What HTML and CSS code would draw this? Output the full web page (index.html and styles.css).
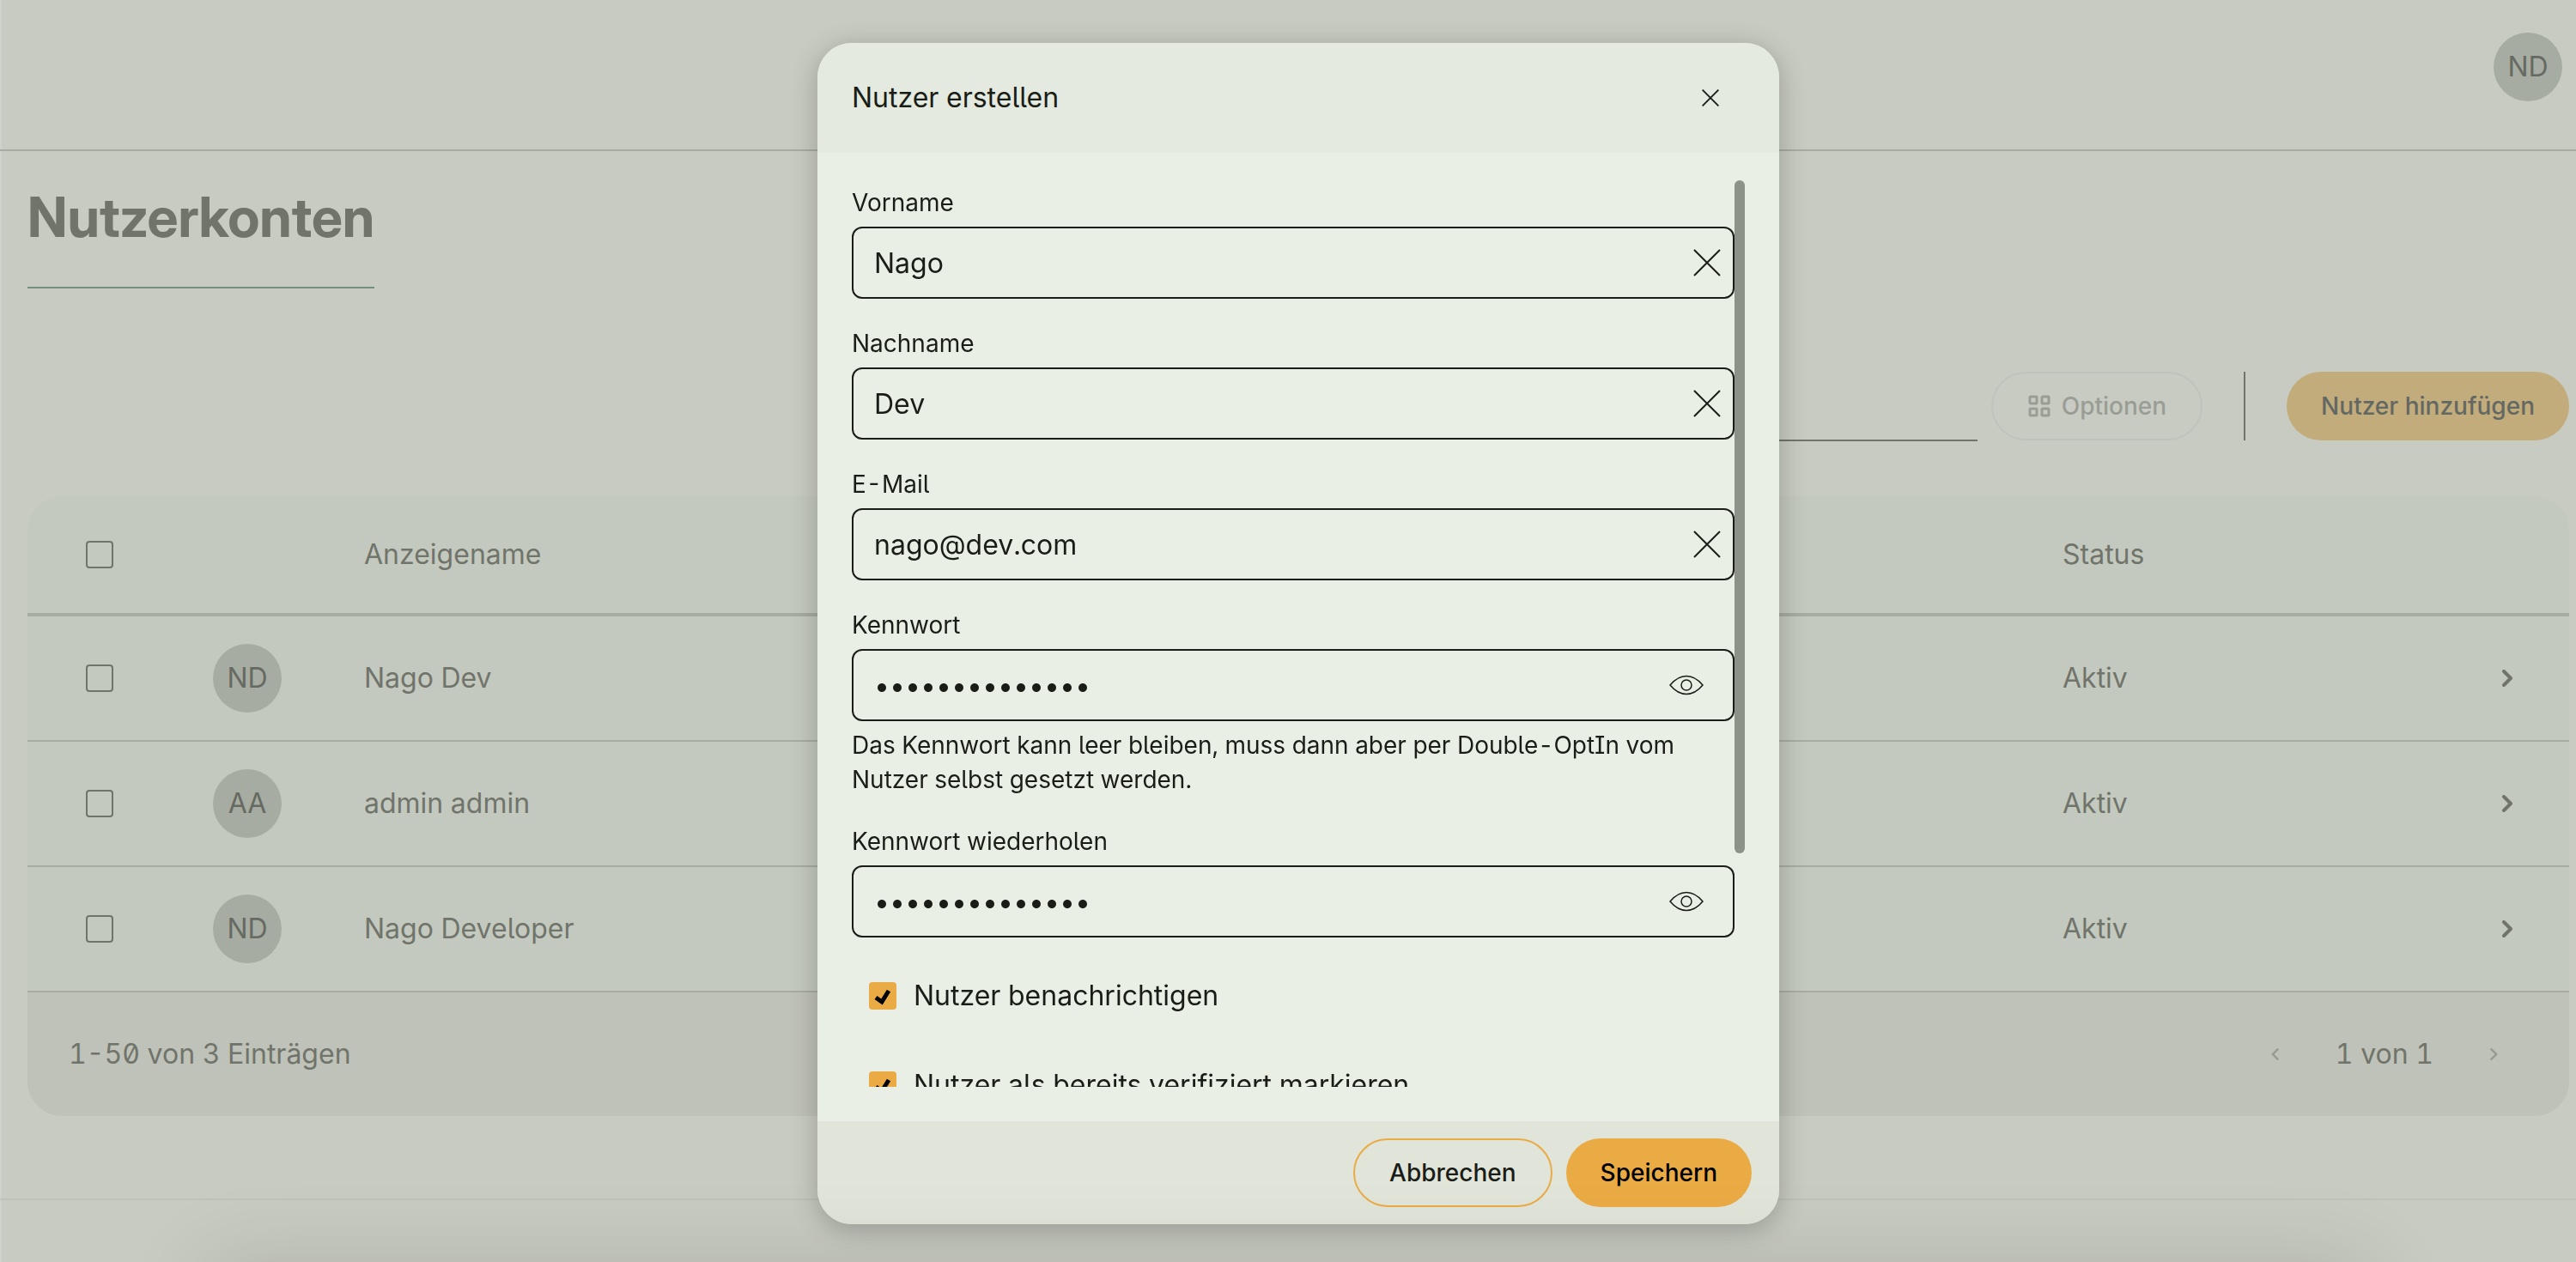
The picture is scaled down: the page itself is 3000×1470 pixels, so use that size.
FILE: index.html
```html
<!DOCTYPE html>
<html lang="de">
<head>
  <meta charset="utf-8">
  <meta name="viewport" content="width=device-width, initial-scale=1">
  <title>Nutzerkonten</title>
  <link rel="stylesheet" href="styles.css">
</head>
<body>
  <svg class="sprite" aria-hidden="true">
    <symbol id="icon-close" viewBox="0 0 32 32"><path d="M1 1l30 30M31 1L1 31" /></symbol>
    <symbol id="icon-eye" viewBox="0 0 40 40"><path d="M1 20C6 14 12 9.500 20 9.500s14 4.500 19 10.500c-5 6-11 10.500-19 10.500S6 26 1 20Z" stroke-width="1.500" /><circle cx="20" cy="20" r="6" stroke-width="1.500" /></symbol>
    <symbol id="icon-grid" viewBox="-2 -2 28 28"><rect x="1" y="1" width="8" height="8" rx="1" /><rect x="15" y="1" width="8" height="8" rx="1" /><rect x="1" y="15" width="8" height="8" rx="1" /><rect x="15" y="15" width="8" height="8" rx="1" /></symbol>
    <symbol id="icon-right" viewBox="0 0 12 20"><path d="M2 2l8 8-8 8" /></symbol>
    <symbol id="icon-left" viewBox="0 0 12 20"><path d="M10 2l-8 8 8 8" /></symbol>
  </svg>

  <header class="topbar">
    <span class="avatar">ND</span>
  </header>

  <main class="content">
    <h1 class="page-title">Nutzerkonten</h1>

    <div class="toolbar">
      <input class="search" type="search" aria-label="Suche">
      <button class="button button-disabled" type="button" disabled>
        <svg class="grid-icon"><use href="#icon-grid" /></svg>Optionen
      </button>
      <span class="divider"></span>
      <button class="button button-muted" type="button">Nutzer hinzufügen</button>
    </div>

    <section class="card">
      <table class="users">
        <colgroup>
          <col class="col-check"><col class="col-avatar"><col><col class="col-status"><col class="col-open">
        </colgroup>
        <thead>
          <tr>
            <th class="cell-check"><input class="tick" type="checkbox" aria-label="Alle auswählen"></th>
            <th></th>
            <th>Anzeigename</th>
            <th>Status</th>
            <th></th>
          </tr>
        </thead>
        <tbody>
          <tr>
            <td class="cell-check"><input class="tick" type="checkbox" aria-label="Nago Dev auswählen"></td>
            <td><span class="avatar">ND</span></td>
            <td>Nago Dev</td>
            <td>Aktiv</td>
            <td class="cell-open"><svg class="chevron"><use href="#icon-right" /></svg></td>
          </tr>
          <tr>
            <td class="cell-check"><input class="tick" type="checkbox" aria-label="admin admin auswählen"></td>
            <td><span class="avatar">AA</span></td>
            <td>admin admin</td>
            <td>Aktiv</td>
            <td class="cell-open"><svg class="chevron"><use href="#icon-right" /></svg></td>
          </tr>
          <tr>
            <td class="cell-check"><input class="tick" type="checkbox" aria-label="Nago Developer auswählen"></td>
            <td><span class="avatar">ND</span></td>
            <td>Nago Developer</td>
            <td>Aktiv</td>
            <td class="cell-open"><svg class="chevron"><use href="#icon-right" /></svg></td>
          </tr>
        </tbody>
      </table>
      <footer class="pager">
        <span class="pager-count">1-50 von 3 Einträgen</span>
        <button class="pager-button" type="button" aria-label="Zurück" disabled><svg class="pager-icon"><use href="#icon-left" /></svg></button>
        <span>1 von 1</span>
        <button class="pager-button" type="button" aria-label="Weiter" disabled><svg class="pager-icon"><use href="#icon-right" /></svg></button>
      </footer>
    </section>
  </main>

  <footer class="page-footer"></footer>

  <div class="overlay">
    <form class="modal" role="dialog" aria-labelledby="modal-title">
      <header class="modal-header">
        <h2 class="modal-title" id="modal-title">Nutzer erstellen</h2>
        <button class="icon-button modal-close" type="button" aria-label="Schließen"><svg class="close-icon"><use href="#icon-close" /></svg></button>
      </header>

      <div class="modal-body">
        <div class="fields">
          <div class="field">
            <label for="first-name">Vorname</label>
            <div class="control">
              <input id="first-name" type="text" value="Nago">
              <button class="icon-button" type="button" aria-label="Leeren"><svg class="clear-icon"><use href="#icon-close" /></svg></button>
            </div>
          </div>
          <div class="field">
            <label for="last-name">Nachname</label>
            <div class="control">
              <input id="last-name" type="text" value="Dev">
              <button class="icon-button" type="button" aria-label="Leeren"><svg class="clear-icon"><use href="#icon-close" /></svg></button>
            </div>
          </div>
          <div class="field">
            <label for="email">E-Mail</label>
            <div class="control">
              <input id="email" type="email" value="nago@dev.com">
              <button class="icon-button" type="button" aria-label="Leeren"><svg class="clear-icon"><use href="#icon-close" /></svg></button>
            </div>
          </div>
          <div class="field">
            <label for="password">Kennwort</label>
            <div class="control control-password">
              <input id="password" type="password" value="12345678901234" aria-describedby="password-hint">
              <button class="icon-button" type="button" aria-label="Kennwort anzeigen"><svg class="eye-icon"><use href="#icon-eye" /></svg></button>
            </div>
            <p class="hint" id="password-hint">Das Kennwort kann leer bleiben, muss dann aber per Double-OptIn vom Nutzer selbst gesetzt werden.</p>
          </div>
          <div class="field">
            <label for="password-repeat">Kennwort wiederholen</label>
            <div class="control control-password">
              <input id="password-repeat" type="password" value="12345678901234">
              <button class="icon-button" type="button" aria-label="Kennwort anzeigen"><svg class="eye-icon"><use href="#icon-eye" /></svg></button>
            </div>
          </div>
          <label class="option"><input class="tick tick-accent" type="checkbox" checked>Nutzer benachrichtigen</label>
          <label class="option"><input class="tick tick-accent" type="checkbox" checked>Nutzer als bereits verifiziert markieren</label>
        </div>
        <div class="scrollbar" aria-hidden="true"><div class="scrollbar-thumb"></div></div>
      </div>

      <footer class="modal-footer">
        <button class="button button-outline" type="button">Abbrechen</button>
        <button class="button button-primary" type="submit">Speichern</button>
      </footer>
    </form>
  </div>
</body>
</html>
```

FILE: styles.css
```css
:root {
  --page: #c8cbc1;
  --page-text: #70746b;
  --line: #a6aca1;
  --soft-line: #bfc2b8;
  --row: #c4c9bf;
  --ink: #1a1d17;
  --surface: #e9efe4;
  --accent: #eaab45;
}

* {
  box-sizing: border-box;
}

html {
  height: 100%;
}

body {
  position: relative;
  display: flex;
  flex-direction: column;
  min-height: 100%;
  margin: 0;
  overflow: hidden;
  background: linear-gradient(to right, #cfd2cb 2px, var(--page) 2px);
  color: var(--page-text);
  font-family: Inter, "Liberation Sans", sans-serif;
  font-size: 32px;
  line-height: 48px;
  font-feature-settings: "ss02", "tnum", "zero";
  font-variation-settings: "opsz" 16;
}

button,
input {
  margin: 0;
  color: inherit;
  font: inherit;
  font-feature-settings: inherit;
  font-variation-settings: inherit;
}

svg {
  display: block;
  fill: none;
  stroke: currentColor;
}

.sprite {
  position: absolute;
  width: 0;
  height: 0;
}

/* Page behind the dialog */
.topbar {
  display: flex;
  align-items: center;
  justify-content: flex-end;
  height: 176px;
  padding: 0 16px 18px;
  border-bottom: 2px solid var(--line);
}

.avatar {
  display: flex;
  align-items: center;
  justify-content: center;
  width: 80px;
  height: 80px;
  border-radius: 50%;
  background: var(--line);
  color: #666a62;
}

.content {
  flex: 1;
  padding: 40px 8px 96px 32px;
}

.page-title {
  width: fit-content;
  margin: 0 0 96px;
  padding-bottom: 44px;
  border-bottom: 2px solid #718f7d;
  font-family: "Inter Display", Inter, "Liberation Sans", sans-serif;
  font-size: 64px;
  font-variation-settings: "opsz" 32;
  font-weight: 700;
  line-height: 74px;
}

.toolbar {
  display: flex;
  align-items: center;
  justify-content: flex-end;
  height: 82px;
  margin-bottom: 64px;
}

.search {
  align-self: stretch;
  width: 640px;
  margin-right: 16px;
  border: 0;
  border-bottom: 2px solid var(--page-text);
  background: none;
}

.divider {
  width: 2px;
  height: 80px;
  margin: 0 48px;
  background: var(--page-text);
}

.button {
  display: flex;
  align-items: center;
  gap: 12px;
  height: 80px;
  padding: 0 40px;
  border: 2px solid transparent;
  border-radius: 40px;
  background: none;
  font-size: 28px;
  font-variation-settings: "opsz" 14;
  font-weight: 500;
}

.button-disabled {
  border-color: #c0c3bd;
  color: #999d95;
}

.button-muted {
  border: 0;
  background: #c2ac7c;
  color: #636862;
}

.grid-icon {
  width: 28px;
  height: 28px;
  stroke-width: 3;
}

.card {
  overflow: hidden;
  border-radius: 40px;
  background: var(--row);
}

.users {
  width: 100%;
  border-collapse: separate;
  border-spacing: 0;
  table-layout: fixed;
}

.col-check {
  width: 168px;
}

.col-avatar {
  width: 176px;
}

.col-status {
  width: 494px;
}

.col-open {
  width: 144px;
}

.users th,
.users td {
  height: 146px;
  padding: 0 0 0 48px;
  border-bottom: 2px solid var(--line);
  font-weight: 400;
  text-align: left;
}

.users th {
  height: 140px;
  border-bottom-width: 4px;
}

.users .cell-check {
  padding: 0 68px;
}

.users .cell-open {
  padding: 0 66px;
}

.tick {
  display: block;
  width: 32px;
  height: 32px;
  appearance: none;
  border: 2px solid var(--page-text);
  border-radius: 4px;
}

.tick-accent {
  border: 0;
  background: var(--accent) url("data:image/svg+xml,%3Csvg xmlns='http://www.w3.org/2000/svg' viewBox='0 0 32 32'%3E%3Cpath d='M8 18l7 5 8-13' fill='none' stroke='black' stroke-width='5'/%3E%3C/svg%3E");
}

.chevron {
  width: 12px;
  height: 20px;
  stroke-width: 4;
  stroke-linecap: round;
  stroke-linejoin: round;
}

.pager {
  display: flex;
  align-items: center;
  height: 144px;
  padding: 0 48px;
  background: var(--soft-line);
}

.pager-count {
  flex: 1;
}

.pager-button {
  display: flex;
  align-items: center;
  justify-content: center;
  width: 80px;
  height: 80px;
  margin: 0 30px;
  padding: 0;
  border: 0;
  background: none;
  color: #969a91;
}

.pager-button:last-child {
  margin-right: 0;
}

.pager-icon {
  width: 10px;
  height: 16px;
  stroke-width: 3;
}

.page-footer {
  height: 74px;
  border-top: 2px solid var(--soft-line);
}

/* Shade of the bar that sits below the window's lower edge */
body::after {
  content: "";
  position: fixed;
  z-index: 2;
  top: 100%;
  right: 240px;
  left: 240px;
  height: 160px;
  box-shadow: 0 0 100px rgba(0, 0, 0, 0.12);
}

/* Dialog */
.overlay {
  position: fixed;
  inset: 0;
  z-index: 1;
  display: flex;
  justify-content: center;
  padding: 50px 0 44px 24px;
}

.modal {
  display: flex;
  flex-direction: column;
  width: 1120px;
  max-width: 100%;
  overflow: hidden;
  border-radius: 40px;
  background: var(--surface);
  box-shadow: 0 6px 32px rgba(0, 0, 0, 0.24);
  color: var(--ink);
}

.modal-header {
  display: flex;
  align-items: center;
  justify-content: space-between;
  height: 128px;
  padding: 0 40px;
  background: #e4eadf;
}

.modal-title {
  margin: 0;
  font-size: 32px;
  font-weight: 400;
}

.icon-button {
  display: flex;
  align-items: center;
  justify-content: center;
  padding: 0;
  border: 0;
  background: none;
}

.modal-close {
  width: 80px;
  height: 80px;
}

.close-icon {
  width: 20px;
  height: 20px;
  stroke-width: 3;
}

.modal-body {
  display: flex;
  flex: 1;
  min-height: 0;
  padding: 32px 40px 40px;
}

.fields {
  display: flex;
  flex: 1;
  flex-direction: column;
  gap: 32px;
  min-width: 0;
  overflow-y: auto;
  padding: 6px 0 332px;
  scrollbar-width: none;
}

.scrollbar {
  display: grid;
  grid-template-rows: 49fr 17fr;
  width: 12px;
}

.scrollbar-thumb {
  border-radius: 6px;
  background: #8c9287;
}

.field {
  display: flex;
  flex-direction: column;
  gap: 8px;
  font-size: 28px;
  font-variation-settings: "opsz" 14;
  line-height: 40px;
}

.control {
  display: flex;
  align-items: center;
  height: 84px;
  padding: 0 14px 0 24px;
  border: 2px solid var(--ink);
  border-radius: 12px;
  font-size: 32px;
  font-variation-settings: "opsz" 16;
}

.control-password {
  padding-right: 34px;
}

.control input {
  flex: 1;
  min-width: 0;
  height: 48px;
  padding: 0;
  border: 0;
  outline: 0;
  background: none;
}

.clear-icon {
  width: 32px;
  height: 32px;
  stroke-width: 2;
}

.eye-icon {
  width: 40px;
  height: 40px;
}

.hint {
  margin: 0;
}

.option {
  display: flex;
  flex: none;
  align-items: center;
  gap: 20px;
  height: 72px;
  padding: 0 20px;
}

.modal-footer {
  display: flex;
  align-items: center;
  justify-content: flex-end;
  gap: 16px;
  height: 120px;
  padding: 0 32px;
  background: #e1e4d9;
}

.button-outline {
  border-color: var(--accent);
}

.button-primary {
  border: 0;
  background: var(--accent);
  color: #000;
}
```
